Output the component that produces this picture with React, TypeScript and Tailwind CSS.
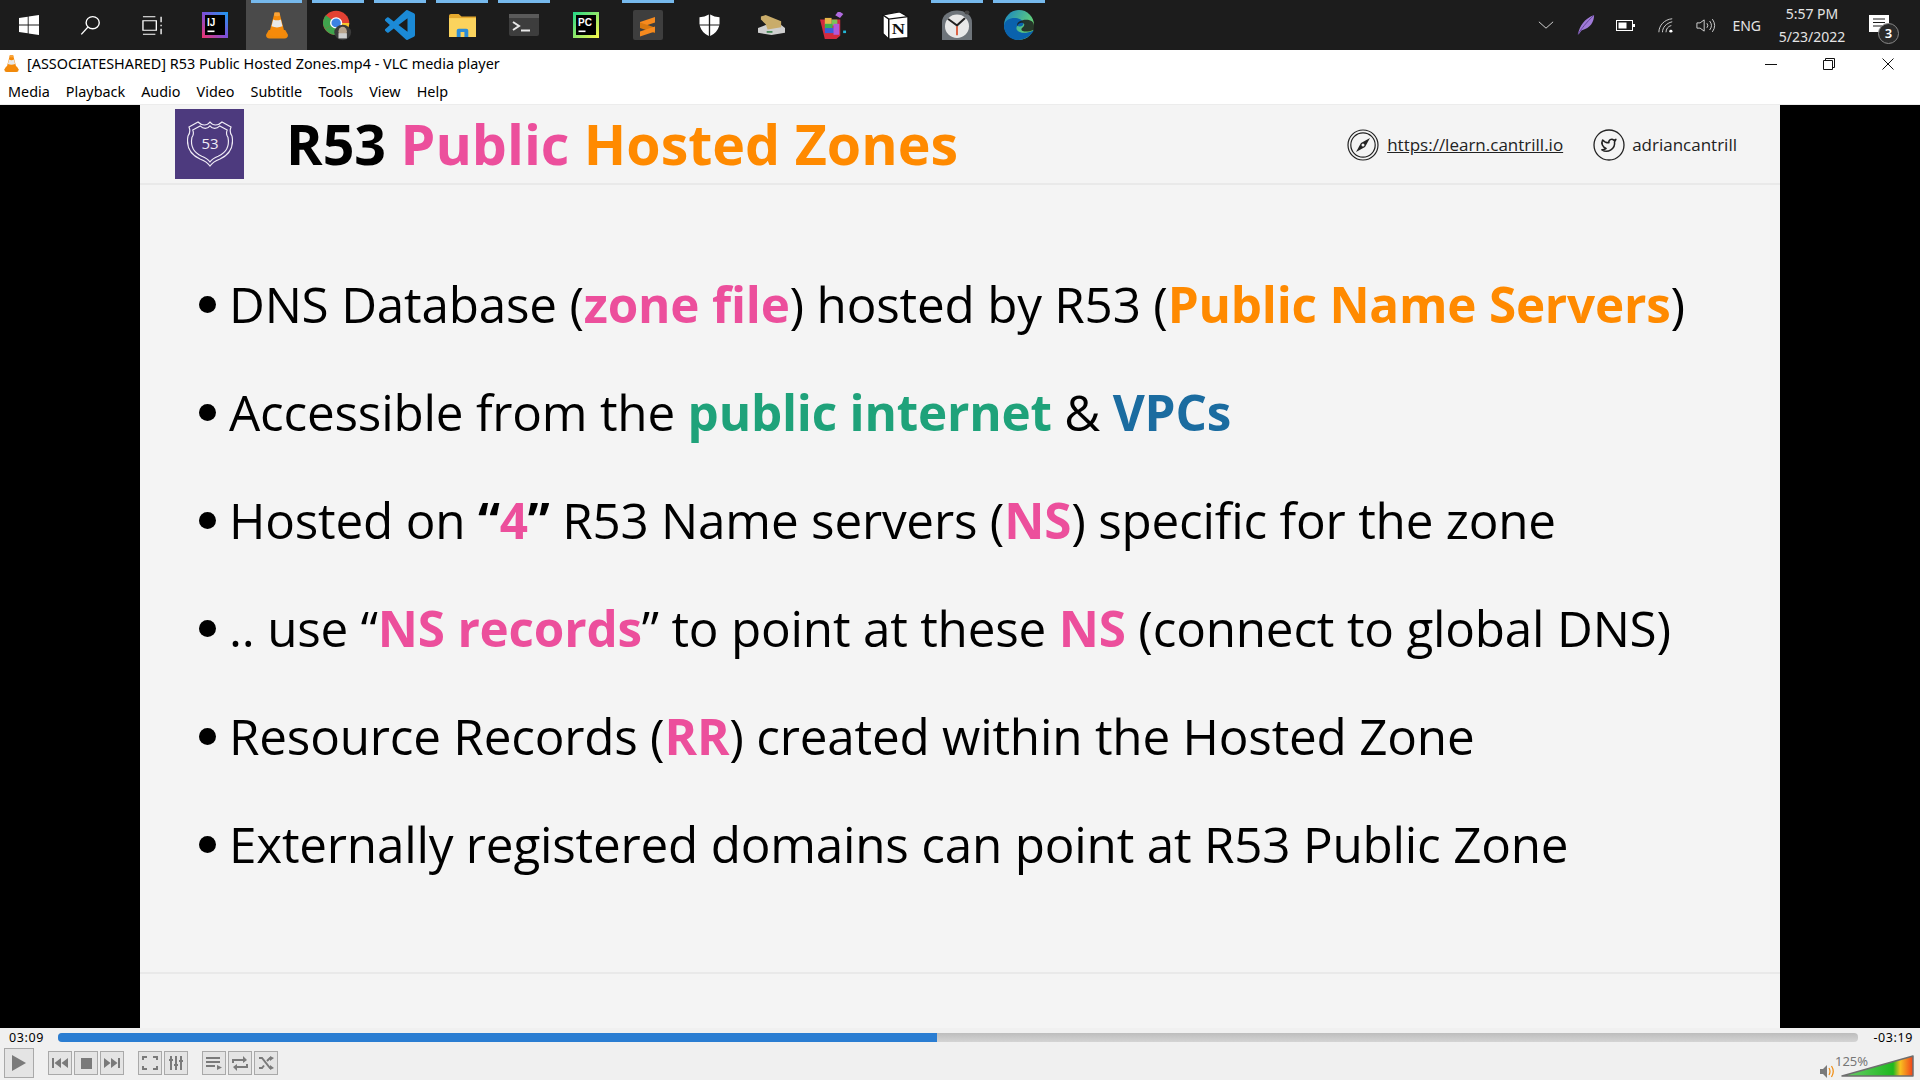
import type { ReactNode } from "react";

const UI_FONT = "font-['Noto_Sans','Open_Sans',sans-serif]";

function VlcCone({ w = 26, h = 29 }: { w?: number; h?: number }) {
  return (
    <svg width={w} height={h} viewBox="0 0 38 38" preserveAspectRatio="none">
      <path d="M3 31 L7 25 H31 L35 31 Q35 36 30 36 H8 Q3 36 3 31Z" fill="#f08a0c" />
      <path d="M15.5 2 H22.5 L31 31 Q19 36 7 31Z" fill="#f58a0a" />
      <path d="M13.4 11 Q19 13.5 24.6 11 L27 20 Q19 23 11 20Z" fill="#e8e8e8" />
      <path d="M15.5 2 H22.5 L23.5 6 Q19 7.5 14.5 6Z" fill="#f9a43a" />
    </svg>
  );
}

function WinLogo() {
  return (
    <svg width="20" height="20" viewBox="0 0 22 22" fill="#fff">
      <path d="M0 3.2 L9.6 1.9 V10.4 H0Z M10.6 1.7 L22 0 V10.4 H10.6Z M0 11.5 H9.6 V20 L0 18.7Z M10.6 11.5 H22 V22 L10.6 20.3Z" />
    </svg>
  );
}

function SearchIcon() {
  return (
    <svg width="21" height="21" viewBox="0 0 24 26" fill="none" stroke="#fff" strokeWidth="1.6" preserveAspectRatio="none">
      <circle cx="14.5" cy="9.5" r="7.5" />
      <path d="M9 15 L1.5 24" />
    </svg>
  );
}

function TaskView() {
  return (
    <svg width="21" height="19" viewBox="0 0 22 24" fill="none" stroke="#fff" strokeWidth="1.4" preserveAspectRatio="none">
      <path d="M1 1 H14 M1 23 H14 M1 6 H15 V18 H1Z M20 1 V8 M20 11 V13 M20 16 V23" />
    </svg>
  );
}

function IntelliJ() {
  return (
    <svg width="26" height="26" viewBox="0 0 26 26">
      <defs>
        <linearGradient id="ij" x1="0" y1="1" x2="1" y2="0">
          <stop offset="0" stopColor="#f0336c" />
          <stop offset="0.5" stopColor="#7b4fd8" />
          <stop offset="1" stopColor="#1a9cf0" />
        </linearGradient>
      </defs>
      <rect width="26" height="26" fill="url(#ij)" />
      <rect x="3" y="3" width="20" height="20" fill="#000" />
      <text x="5" y="13.5" fontSize="10" fontWeight="700" fill="#fff" fontFamily="Liberation Sans, sans-serif">IJ</text>
      <rect x="5.5" y="18.5" width="7" height="1.6" fill="#fff" />
    </svg>
  );
}

function Chrome() {
  return (
    <svg width="30" height="31" viewBox="0 0 32 36" preserveAspectRatio="none">
      <circle cx="14" cy="15" r="14" fill="#e34133" />
      <path d="M14 15 L2 22 A14 14 0 0 1 3 6Z" fill="#3fa34d" />
      <path d="M14 15 L2 22 A14 14 0 0 0 24 25Z" fill="#3fa34d" />
      <path d="M14 15 L28 15 A14 14 0 0 1 24 25Z" fill="#f7c52b" />
      <circle cx="14" cy="15" r="6.5" fill="#fff" />
      <circle cx="14" cy="15" r="5" fill="#3b82e4" />
      <circle cx="21" cy="26" r="9" fill="#3a3a3a" />
      <ellipse cx="21" cy="25" rx="4.5" ry="5.5" fill="#b9a58e" />
      <path d="M16.5 27 H25.5 V33 H16.5Z" fill="#cfcfcf" />
    </svg>
  );
}

function VsCode() {
  return (
    <svg width="30" height="30" viewBox="0 0 24 24" fill="#1b8ad6">
      <path d="M23.15 2.587L18.21.21a1.494 1.494 0 0 0-1.705.29l-9.46 8.63-4.12-3.128a.999.999 0 0 0-1.276.057L.327 7.261A1 1 0 0 0 .326 8.74L3.899 12 .326 15.26a1 1 0 0 0 .001 1.479L1.65 17.94a.999.999 0 0 0 1.276.057l4.12-3.128 9.46 8.63a1.492 1.492 0 0 0 1.704.29l4.942-2.377A1.5 1.5 0 0 0 24 20.06V3.939a1.5 1.5 0 0 0-.85-1.352zm-5.146 14.861L10.826 12l7.178-5.448v10.896z" />
    </svg>
  );
}

function Folder() {
  return (
    <svg width="27" height="23" viewBox="0 0 28 28" preserveAspectRatio="none">
      <path d="M0 2 Q0 0 2 0 H10 L13 3 H28 V27 H0Z" fill="#e5a92e" />
      <rect y="5" width="28" height="23" fill="#fbd35d" />
      <path d="M8 28 V20 Q8 18 10 18 H18 Q20 18 20 20 V28 H16 V22 H12 V28Z" fill="#2b8cd8" />
    </svg>
  );
}

function Terminal() {
  return (
    <svg width="30" height="22" viewBox="0 0 30 22">
      <rect width="30" height="22" rx="2" fill="#3d3d3d" />
      <rect width="30" height="4" fill="#5a5a5a" />
      <path d="M4 8 L10 12 L4 16" fill="none" stroke="#e8e8e8" strokeWidth="2" />
      <rect x="12" y="15.5" width="9" height="2" fill="#e8e8e8" />
    </svg>
  );
}

function PyCharm() {
  return (
    <svg width="26" height="26" viewBox="0 0 26 26">
      <defs>
        <linearGradient id="pc" x1="0" y1="0" x2="1" y2="1">
          <stop offset="0" stopColor="#21d789" />
          <stop offset="1" stopColor="#fcf84a" />
        </linearGradient>
      </defs>
      <rect width="26" height="26" fill="url(#pc)" />
      <rect x="3" y="3" width="20" height="20" fill="#000" />
      <text x="5" y="13.5" fontSize="10" fontWeight="700" fill="#fff" fontFamily="Liberation Sans, sans-serif">PC</text>
      <rect x="5.5" y="18.5" width="7" height="1.6" fill="#fff" />
    </svg>
  );
}

function Sublime() {
  return (
    <svg width="30" height="30" viewBox="0 0 30 30">
      <rect width="30" height="30" rx="2" fill="#3e3e3e" />
      <path d="M7 12 L22 7 V12.5 L7 17.5Z" fill="#f68a1e" />
      <path d="M7 12.5 L22 17.5 V23 L7 18Z" fill="#d9780f" />
      <path d="M7 18 L22 13 V18 L7 23Z" fill="#f68a1e" transform="translate(0 3.5)" />
    </svg>
  );
}

function Shield() {
  return (
    <svg width="21" height="22" viewBox="0 0 22 27" fill="#fff" preserveAspectRatio="none">
      <path d="M10.3 0.5 V12.8 H0.5 V4 Q6 3.5 10.3 0.5Z M11.7 0.5 Q16 3.5 21.5 4 V12.8 H11.7Z M0.7 14.2 H10.3 V27 Q3 23.5 0.7 14.2Z M11.7 14.2 H21.3 Q19 23.5 11.7 27Z" />
    </svg>
  );
}

function DriveTool() {
  return (
    <svg width="27" height="20" viewBox="0 0 28 26" preserveAspectRatio="none">
      <path d="M0 17 L8 13 H24 L28 17 V23 L14 26 L0 23Z" fill="#cfcfcf" />
      <rect x="9" y="21" width="6" height="2" fill="#2f7d44" />
      <path d="M3 2 L8 0 L24 8 V16 L10 19 L8 12 L3 6Z" fill="#c9ac6a" />
    </svg>
  );
}

function WinRar() {
  return (
    <svg width="27" height="27" viewBox="0 0 28 32" preserveAspectRatio="none">
      <path d="M0 9 L5 32 L17 32 L21 28 V9Z" fill="#d42a3e" />
      <rect x="5" y="7" width="7" height="8" fill="#e8b64a" />
      <rect x="12" y="9" width="6" height="7" fill="#7cc258" />
      <rect x="5" y="14" width="8" height="6" fill="#3fae54" />
      <rect x="5" y="19" width="11" height="6" fill="#3a5fd8" />
      <rect x="14" y="14" width="6" height="13" fill="#b258d8" />
      <rect x="17" y="0" width="6" height="6" transform="rotate(35 20 3)" fill="#b06ae0" />
      <rect x="24" y="22" width="3" height="3" fill="#23b8d8" />
    </svg>
  );
}

function Notion() {
  return (
    <svg width="27" height="29" viewBox="0 0 28 36" preserveAspectRatio="none">
      <path d="M1 5 L18 1 L27 7 V33 L7 35 L1 28Z" fill="#fff" stroke="#111" strokeWidth="1.5" />
      <path d="M1 5 L7 10 L27 7 M7 10 V35" fill="none" stroke="#111" strokeWidth="1.5" />
      <text x="17" y="29" textAnchor="middle" fontSize="19" fontWeight="700" fill="#111" fontFamily="Liberation Serif, serif">N</text>
    </svg>
  );
}

function ClockIcon() {
  return (
    <svg width="30" height="30" viewBox="0 0 30 37" preserveAspectRatio="none">
      <path d="M0 37 V15 A15 14.5 0 0 1 30 15 V37Z" fill="#6e747a" />
      <circle cx="25" cy="3" r="2.5" fill="#444" />
      <ellipse cx="15" cy="20" rx="12" ry="14.5" fill="#e8e8e8" />
      <path d="M6 11 L15 19 L23 10 M15 19 V20" fill="none" stroke="#222" strokeWidth="2.2" />
      <path d="M15 20 V31" stroke="#d8401c" strokeWidth="1.6" />
    </svg>
  );
}

function Edge() {
  return (
    <svg width="30" height="30" viewBox="0 0 31 37" preserveAspectRatio="none">
      <defs>
        <linearGradient id="edgeTop" x1="0" y1="0" x2="1" y2="0.6">
          <stop offset="0" stopColor="#1583c8" />
          <stop offset="1" stopColor="#6fdc6c" />
        </linearGradient>
      </defs>
      <ellipse cx="15.5" cy="18.5" rx="15.5" ry="18.5" fill="url(#edgeTop)" />
      <path d="M0 19 C2 6 20 8 20 17 C20 21 15 21 14 19 C10 24 16 33 31 25 C27 33 21 37 15 37 C6 37 0 29 0 19Z" fill="#0a62ad" />
      <path d="M14 20 C14 16 20 14 21 18 C21 21 18 22 18 24 C18 27 25 28 31 24 L31 19 C31 15 28 12 23 12 C17 12 12 16 14 20Z" fill="#1c1c1c" opacity="0.85" />
    </svg>
  );
}

function Feather() {
  return (
    <svg width="18" height="20" viewBox="0 0 20 26" preserveAspectRatio="none">
      <path d="M1 25 C3 14 8 5 19 0 C19 9 15 17 5 20 L2 25Z" fill="#a07ad8" />
      <path d="M1 25 C5 18 10 10 19 0" fill="none" stroke="#5a3f8c" strokeWidth="1" />
    </svg>
  );
}

function BatteryIcon() {
  return (
    <svg width="19" height="11" viewBox="0 0 19 11">
      <rect x="0.5" y="0.5" width="16" height="10" fill="none" stroke="#fff" strokeWidth="1" />
      <rect x="2.5" y="2.5" width="8" height="6" fill="#fff" />
      <rect x="17" y="4" width="2" height="3" fill="#fff" />
    </svg>
  );
}

function WifiIcon() {
  return (
    <svg width="16" height="15" viewBox="0 0 18 20" fill="none" stroke="#ddd" strokeWidth="1.1" preserveAspectRatio="none">
      <path d="M1 19 C1 10 7 2 16 1" />
      <path d="M5 19 C5 13 9 7 16 5" />
      <path d="M9 19 C9 15 11 11 15 10" />
      <circle cx="14.5" cy="17.5" r="1.8" fill="#fff" stroke="none" />
    </svg>
  );
}

function VolumeIcon() {
  return (
    <svg width="20" height="15" viewBox="0 0 22 20" fill="none" stroke="#ddd" strokeWidth="1.1" preserveAspectRatio="none">
      <path d="M1 6.5 H4.5 L9 2.5 V17.5 L4.5 13.5 H1Z" />
      <path d="M12 7 Q14 10 12 13" />
      <path d="M15 4 Q19 10 15 16" />
      <path d="M18 1.5 Q23 10 18 18.5" />
    </svg>
  );
}

function ActionCenter() {
  return (
    <div className="relative h-[38px] w-[32px]">
      <svg width="20" height="17" viewBox="0 0 20 17" className="absolute left-0 top-[9px]">
        <path d="M0 0 H20 V17 H0Z" fill="#fff" />
        <path d="M4 4 H16 M4 7.5 H16 M4 11 H13" stroke="#1c1c1c" strokeWidth="1.1" />
      </svg>
      <span className="absolute left-[9px] top-[17px] flex h-[21px] w-[21px] items-center justify-center rounded-full border border-[#888] bg-[#2a2a2a] text-[13px] font-semibold text-white">
        3
      </span>
    </div>
  );
}

const taskIcons: { node: ReactNode; open?: boolean; active?: boolean }[] = [
  { node: <WinLogo /> },
  { node: <SearchIcon /> },
  { node: <TaskView /> },
  { node: <IntelliJ /> },
  { node: <VlcCone />, open: true, active: true },
  { node: <Chrome />, open: true },
  { node: <VsCode />, open: true },
  { node: <Folder />, open: true },
  { node: <Terminal />, open: true },
  { node: <PyCharm /> },
  { node: <Sublime />, open: true },
  { node: <Shield /> },
  { node: <DriveTool /> },
  { node: <WinRar /> },
  { node: <Notion /> },
  { node: <ClockIcon />, open: true },
  { node: <Edge />, open: true },
];

function Taskbar() {
  return (
    <div className="flex h-[50px] shrink-0 items-center bg-[#1c1c1c] text-[#e4e4e4]">
      <div className="-ml-[2px] flex h-full">
        {taskIcons.map((t, i) => (
          <div
            key={i}
            className={`relative flex h-full w-[61.9px] items-center justify-center ${t.active ? "bg-[#4a4a4a]" : ""}`}
          >
            {t.open && <div className="absolute left-[5px] right-[5px] top-0 h-[3px] bg-[#76b9ed]" />}
            {t.node}
          </div>
        ))}
      </div>
      <div className="ml-auto flex h-full items-center">
        <svg width="16" height="8" viewBox="0 0 18 10" fill="none" stroke="#ddd" strokeWidth="1.1" preserveAspectRatio="none" className="mr-[23px]">
          <path d="M1 1 L9 9 L17 1" />
        </svg>
        <div className="mr-[21px] flex"><Feather /></div>
        <div className="mr-[23px] flex"><BatteryIcon /></div>
        <div className="mr-[22px] flex"><WifiIcon /></div>
        <div className="mr-[16px] flex"><VolumeIcon /></div>
        <span className="mr-[17px] text-[14px]">ENG</span>
        <div className="mr-[23px] flex w-[68px] flex-col items-center text-[14px] leading-[23px]">
          <span>5:57 PM</span>
          <span>5/23/2022</span>
        </div>
        <div className="mr-[19px]"><ActionCenter /></div>
      </div>
    </div>
  );
}

function TitleBar() {
  return (
    <div className="flex h-[27px] shrink-0 items-center bg-white">
      <div className="ml-[3px] mr-[7px] flex"><VlcCone w={17} h={19} /></div>
      <span className="pt-[1px] text-[14.4px] text-black">[ASSOCIATESHARED] R53 Public Hosted Zones.mp4 - VLC media player</span>
      <div className="ml-auto flex items-center">
        <svg width="12" height="12" viewBox="0 0 12 12" stroke="#111" className="mr-[46px]">
          <path d="M0 6.5 H12" />
        </svg>
        <svg width="12" height="12" viewBox="0 0 12 12" fill="none" stroke="#111" className="mr-[47px]">
          <path d="M0.5 2.5 H9.5 V11.5 H0.5Z M2.5 2 V0.5 H11.5 V9.5 H10" />
        </svg>
        <svg width="12" height="12" viewBox="0 0 12 12" stroke="#111" className="mr-[26px]">
          <path d="M0.5 0.5 L11.5 11.5 M11.5 0.5 L0.5 11.5" />
        </svg>
      </div>
    </div>
  );
}

function MenuBar() {
  const items = ["Media", "Playback", "Audio", "Video", "Subtitle", "Tools", "View", "Help"];
  return (
    <div className="flex h-[28px] shrink-0 items-center gap-[16px] border-b border-[#ececec] bg-white pl-[8px] pt-[3px] text-[14.4px] text-black">
      {items.map((m) => (
        <span key={m}>{m}</span>
      ))}
    </div>
  );
}

const SHIELD_D =
  "M23 1 C26 5 31 5 35 1 L44 6 Q42 11 45 15 C47 26 42 34 33 38 C28 40 25 42 23 45 C21 42 18 40 13 38 C4 34 -1 26 1 15 Q4 11 2 6 L11 1 C15 5 20 5 23 1Z";

function Shield53() {
  return (
    <div className="flex h-[70px] w-[69px] shrink-0 items-center justify-center bg-[#4d3a7e]">
      <svg width="46" height="46" viewBox="0 0 46 46" fill="none" stroke="#f0ecf6" strokeWidth="1.2">
        <path d={SHIELD_D} />
        <path d={SHIELD_D} transform="translate(4.1 4.1) scale(0.82)" strokeWidth="1.4" />
        <text x="23" y="27.5" textAnchor="middle" fontSize="15" stroke="none" fill="#f0ecf6" fontFamily="Open Sans, sans-serif">53</text>
      </svg>
    </div>
  );
}

function CompassIcon() {
  return (
    <svg width="32" height="32" viewBox="0 0 32 32" fill="none" stroke="#222" strokeWidth="1.2">
      <circle cx="16" cy="16" r="15" />
      <circle cx="16" cy="16" r="12.2" />
      <path d="M23 9 L18 18 L9 23 L14 14Z" fill="#222" stroke="none" />
      <circle cx="16" cy="16" r="1.5" fill="#f4f4f4" stroke="none" />
    </svg>
  );
}

function TwitterCircle() {
  return (
    <svg width="32" height="32" viewBox="0 0 32 32" fill="none" stroke="#222" strokeWidth="1.3">
      <circle cx="16" cy="16" r="15" />
      <g transform="translate(7.5 7.5) scale(0.7)" strokeWidth="2.2" strokeLinejoin="round">
        <path d="M22 4s-.7 2.1-2 3.4c1.6 10-9.4 17.3-18 11.6 2.2.1 4.4-.6 6-2C3 15.5.5 9.6 3 5c2.2 2.6 5.6 4.1 9 4-.9-4.2 4-6.6 7-3.8 1.1 0 3-1.2 3-1.2z" />
      </g>
    </svg>
  );
}

const PINK = "font-bold text-[#ec4f9c]";
const ORANGE = "font-bold text-[#ff8a00]";

const bullets: ReactNode[] = [
  <>DNS Database (<b className={PINK}>zone file</b>) hosted by R53 (<b className={ORANGE}>Public Name Servers</b>)</>,
  <>Accessible from the <b className="font-bold text-[#1fa27a]">public internet</b> &amp; <b className="font-bold text-[#1b6ca0]">VPCs</b></>,
  <>Hosted on <b className="font-bold">“</b><b className={PINK}>4</b><b className="font-bold">”</b> R53 Name servers (<b className={PINK}>NS</b>) specific for the zone</>,
  <>.. use “<b className={PINK}>NS records</b>” to point at these <b className={PINK}>NS</b> (connect to global DNS)</>,
  <>Resource Records (<b className={PINK}>RR</b>) created within the Hosted Zone</>,
  <>Externally registered domains can point at R53 Public Zone</>,
];

function Slide() {
  return (
    <div className="flex min-h-0 flex-1 bg-black">
      <div className="mx-[140px] flex w-[1640px] flex-col bg-[#f4f4f4] font-['Open_Sans',sans-serif] text-black">
        <div className="flex h-[80px] shrink-0 items-center border-b-2 border-[#e9e9e9] pl-[35px] pr-[43px]">
          <Shield53 />
          <h1 className="ml-[42px] text-[55.5px] font-bold leading-none">
            R53 <span className="text-[#ec4f9c]">Public</span> <span className="text-[#ff8a00]">Hosted Zones</span>
          </h1>
          <div className="ml-auto flex items-center pt-[1px] text-[17px] text-[#222]">
            <CompassIcon />
            <span className="ml-[8px] underline">https://learn.cantrill.io</span>
            <div className="ml-[30px] flex"><TwitterCircle /></div>
            <span className="ml-[7px]">adriancantrill</span>
          </div>
        </div>
        <ul className="flex-1 pl-[59px] pt-[65px]">
          {bullets.map((b, i) => (
            <li key={i} className="flex h-[108px] items-center text-[49.4px] leading-none tracking-[-0.2px]">
              <span className="mr-[13px] h-[17px] w-[17px] shrink-0 rounded-full bg-black" />
              <span className="whitespace-nowrap">{b}</span>
            </li>
          ))}
        </ul>
        <div className="h-[56px] shrink-0 border-t-2 border-[#e9e9e9]" />
      </div>
    </div>
  );
}

function CtrlBtn({ big, children }: { big?: boolean; children: ReactNode }) {
  return (
    <div
      className={`flex items-center justify-center border border-[#a9a9a9] bg-[#e4e4e4] ${big ? "h-[30px] w-[30px]" : "h-[24px] w-[24px]"}`}
    >
      {children}
    </div>
  );
}

const G = "#7a7a7a";

function Controls() {
  return (
    <div className="h-[52px] shrink-0 bg-[#f0f0f0] text-black">
      <div className="flex h-[20px] items-center pl-[9px] pr-[7px] text-[12.5px] tracking-[0.6px]">
        <span className="w-[49px]">03:09</span>
        <div className="-mt-[2px] h-[9px] w-[1800px] overflow-hidden rounded-[4px] bg-gradient-to-b from-[#bdbdbd] to-[#d4d4d4]">
          <div className="h-full w-[879px] bg-[#2a7dd2]" />
        </div>
        <span className="ml-auto">-03:19</span>
      </div>
      <div className="flex h-[32px] items-start pl-[4px]">
        <CtrlBtn big>
          <svg width="16" height="18" viewBox="0 0 16 18" fill={G}><path d="M1 1 L15 9 L1 17Z" /></svg>
        </CtrlBtn>
        <div className="ml-[14px] mt-[3px] flex gap-[2px]">
          <CtrlBtn>
            <svg width="16" height="10" viewBox="0 0 16 10" fill={G}><path d="M0 0 H2 V10 H0Z M9 0 V10 L2.5 5Z M16 0 V10 L9.5 5Z" /></svg>
          </CtrlBtn>
          <CtrlBtn>
            <svg width="11" height="11" viewBox="0 0 11 11" fill={G}><rect width="11" height="11" /></svg>
          </CtrlBtn>
          <CtrlBtn>
            <svg width="16" height="10" viewBox="0 0 16 10" fill={G}><path d="M16 0 H14 V10 H16Z M7 0 V10 L13.5 5Z M0 0 V10 L6.5 5Z" /></svg>
          </CtrlBtn>
        </div>
        <div className="ml-[14px] mt-[3px] flex gap-[2px]">
          <CtrlBtn>
            <svg width="16" height="14" viewBox="0 0 16 14" fill="none" stroke={G} strokeWidth="2"><path d="M1 4 V1 H5 M11 1 H15 V4 M15 10 V13 H11 M5 13 H1 V10" /></svg>
          </CtrlBtn>
          <CtrlBtn>
            <svg width="16" height="14" viewBox="0 0 16 14" fill="none" stroke={G} strokeWidth="2"><path d="M3 0 V14 M8 0 V14 M13 0 V14 M1 4 H5 M6 9 H10 M11 5 H15" /></svg>
          </CtrlBtn>
        </div>
        <div className="ml-[14px] mt-[3px] flex gap-[2px]">
          <CtrlBtn>
            <svg width="16" height="13" viewBox="0 0 16 13" fill={G}><path d="M0 0 H14 V2 H0Z M0 4 H14 V6 H0Z M0 8 H9 V10 H0Z M11 8 L16 10.5 L11 13Z" /></svg>
          </CtrlBtn>
          <CtrlBtn>
            <svg width="16" height="15" viewBox="0 0 16 15" fill="none" stroke={G} strokeWidth="2"><path d="M1 7 V4 H13 M15 8 V11 H3" /><path d="M11 0 L15 4 L11 7Z M5 8 L1 11 L5 15Z" fill={G} stroke="none" /></svg>
          </CtrlBtn>
          <CtrlBtn>
            <svg width="15" height="14" viewBox="0 0 15 14" fill="none" stroke={G} strokeWidth="2"><path d="M0 2 H3 L11 12 H13 M0 12 H3 L5 9.5 M8 5 L11 2 H13" /><path d="M11 0 L15 2 L11 5Z M11 9 L15 12 L11 14Z" fill={G} stroke="none" /></svg>
          </CtrlBtn>
        </div>
        <div className="relative ml-auto mr-[6px] mt-[7px] h-[22px] w-[94px]">
          <svg width="14" height="13" viewBox="0 0 14 13" className="absolute left-0 top-[10px]">
            <path d="M0 4 H3 L7 0 V13 L3 9 H0Z" fill="#7a7a7a" />
            <path d="M9 3 Q11 6.5 9 10 M11.5 1 Q15 6.5 11.5 12" fill="none" stroke="#f08a0c" strokeWidth="1.2" />
          </svg>
          <svg width="73" height="22" viewBox="0 0 73 22" className="absolute left-[21px] top-0">
            <defs>
              <linearGradient id="vol" x1="0" y1="0" x2="1" y2="0">
                <stop offset="0" stopColor="#6fcf6f" />
                <stop offset="0.72" stopColor="#1fb81f" />
                <stop offset="0.82" stopColor="#f8c020" />
                <stop offset="1" stopColor="#f0401a" />
              </linearGradient>
            </defs>
            <path d="M1 21 L72 1 V21Z" fill="url(#vol)" stroke="#6e6e6e" strokeWidth="1.5" strokeLinejoin="round" />
          </svg>
          <span className="absolute left-[15px] top-0 text-[13px] leading-[13px] text-[#777]">125%</span>
        </div>
      </div>
    </div>
  );
}

export default function App() {
  return (
    <div className={`flex h-[1080px] w-[1920px] flex-col overflow-hidden ${UI_FONT}`}>
      <Taskbar />
      <TitleBar />
      <MenuBar />
      <Slide />
      <Controls />
    </div>
  );
}
